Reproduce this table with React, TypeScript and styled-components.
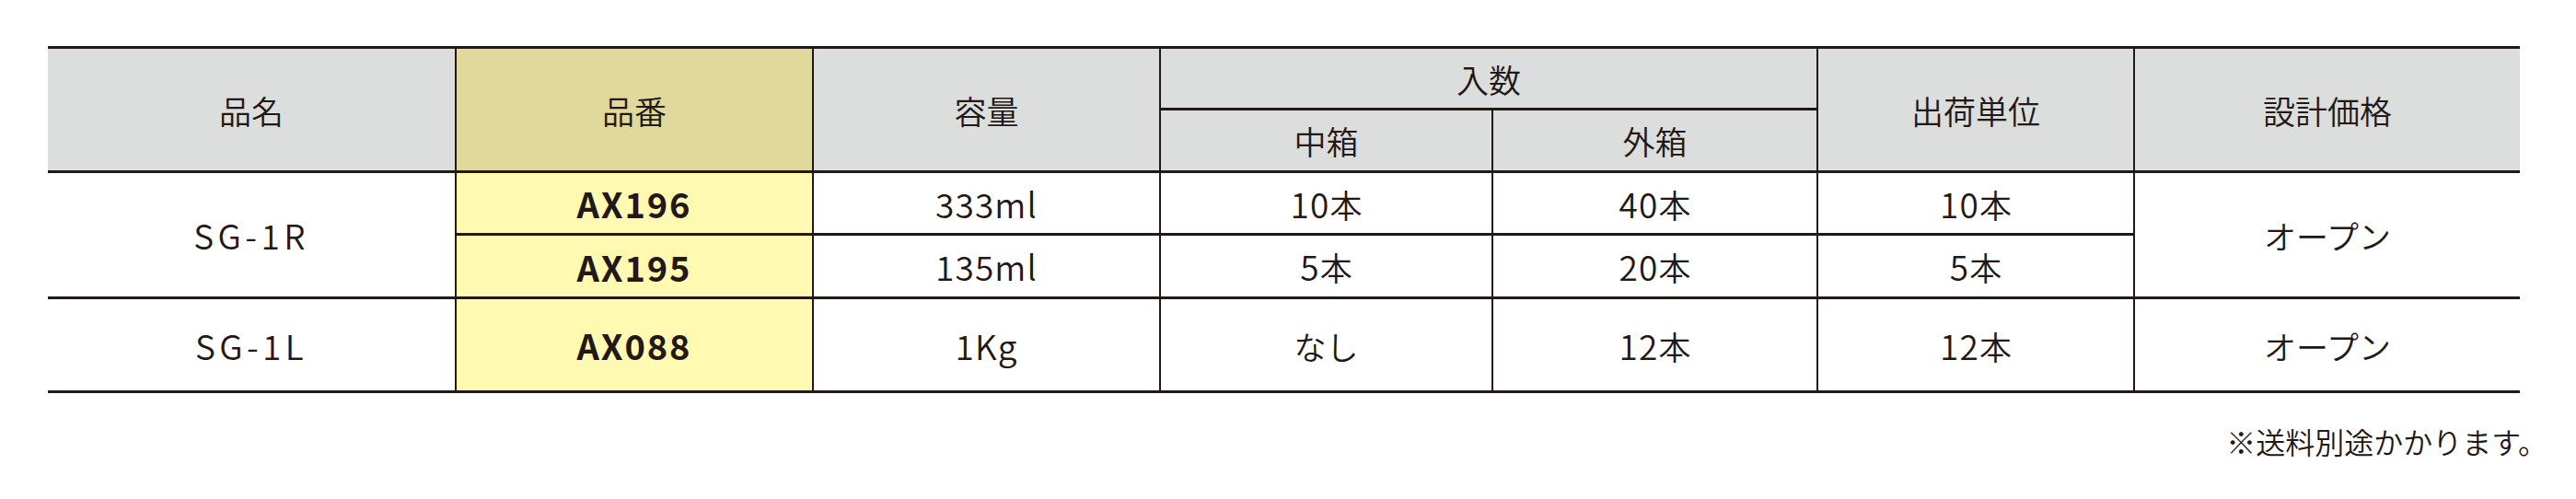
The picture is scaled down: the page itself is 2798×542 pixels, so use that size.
import styled, { createGlobalStyle } from 'styled-components';

const GlobalStyle = createGlobalStyle`
    html, body {
        margin: 0;
        padding: 0;
        background: #ffffff;
    }
    body {
        font-family: "Noto Sans CJK JP", "Noto Sans", sans-serif;
        color: #231815;
    }
`

const Page = styled.div`
    display: flex;
    flex-direction: column;
    width: 2798px;
    height: 542px;
    padding: 50px 0 0 52px;
    box-sizing: border-box;
`

const Table = styled.table`
    width: 2685px;
    border-collapse: collapse;
    table-layout: fixed;
`

const Row = styled.tr<{ $height: number }>`
    height: ${p => p.$height}px;
`

const Th = styled.th<{ $code?: boolean }>`
    padding: 0;
    font-size: 35px;
    font-weight: 350;
    text-align: center;
    vertical-align: middle;
    background: ${p => (p.$code ? '#e0d99b' : '#dcdddd')};
    border-top: 3px solid #231815;
    border-bottom: 3px solid #231815;
    border-left: 2px solid #231815;
    border-right: 2px solid #231815;

    &:first-child { border-left: none; }
    &:last-child { border-right: none; }
`

const SubTh = styled(Th)`
    border-top: 2px solid #231815;
    &:first-child { border-left: 2px solid #231815; }
    &:last-child { border-right: 2px solid #231815; }
`

const Td = styled.td<{ $code?: boolean; $edge?: 'first' | 'last' }>`
    padding: 0;
    font-size: ${p => (p.$code ? 38 : 37)}px;
    font-weight: ${p => (p.$code ? 700 : 350)};
    letter-spacing: ${p => (p.$code ? '0.05em' : '0.03em')};
    text-align: center;
    vertical-align: middle;
    background: ${p => (p.$code ? '#fff9b1' : '#ffffff')};
    border-top: 3px solid #231815;
    border-bottom: 3px solid #231815;
    border-left: ${p => (p.$edge === 'first' ? 'none' : '2px solid #231815')};
    border-right: ${p => (p.$edge === 'last' ? 'none' : '2px solid #231815')};
`

const Name = styled(Td)`
    letter-spacing: 0.12em;
`

const Jp = styled.span`
    letter-spacing: 0;
    font-size: 35px;
`

const Note = styled.p`
    margin: 30px 31px 0 0;
    align-self: flex-end;
    font-size: 32px;
    font-weight: 350;
    line-height: 44px;
`

const widths = [443, 388, 377, 361, 353, 344, 419];

const App = () => {
    return (
        <>
            <GlobalStyle />
            <Page>
                <Table>
                    <colgroup>
                        {widths.map((w, i) => <col key={i} style={{ width: w }} />)}
                    </colgroup>
                    <thead>
                        <Row $height={67}>
                            <Th rowSpan={2}>品名</Th>
                            <Th rowSpan={2} $code>品番</Th>
                            <Th rowSpan={2}>容量</Th>
                            <Th colSpan={2}>入数</Th>
                            <Th rowSpan={2}>出荷単位</Th>
                            <Th rowSpan={2}>設計価格</Th>
                        </Row>
                        <Row $height={68}>
                            <SubTh>中箱</SubTh>
                            <SubTh>外箱</SubTh>
                        </Row>
                    </thead>
                    <tbody>
                        <Row $height={68}>
                            <Name rowSpan={2} $edge="first">SG-1R</Name>
                            <Td $code>AX196</Td>
                            <Td>333ml</Td>
                            <Td>10<Jp>本</Jp></Td>
                            <Td>40<Jp>本</Jp></Td>
                            <Td>10<Jp>本</Jp></Td>
                            <Td rowSpan={2} $edge="last"><Jp>オープン</Jp></Td>
                        </Row>
                        <Row $height={69}>
                            <Td $code>AX195</Td>
                            <Td>135ml</Td>
                            <Td>5<Jp>本</Jp></Td>
                            <Td>20<Jp>本</Jp></Td>
                            <Td>5<Jp>本</Jp></Td>
                        </Row>
                        <Row $height={102}>
                            <Name $edge="first">SG-1L</Name>
                            <Td $code>AX088</Td>
                            <Td>1Kg</Td>
                            <Td><Jp>なし</Jp></Td>
                            <Td>12<Jp>本</Jp></Td>
                            <Td>12<Jp>本</Jp></Td>
                            <Td $edge="last"><Jp>オープン</Jp></Td>
                        </Row>
                    </tbody>
                </Table>
                <Note>※送料別途かかります。</Note>
            </Page>
        </>
    );
}

export default App;
